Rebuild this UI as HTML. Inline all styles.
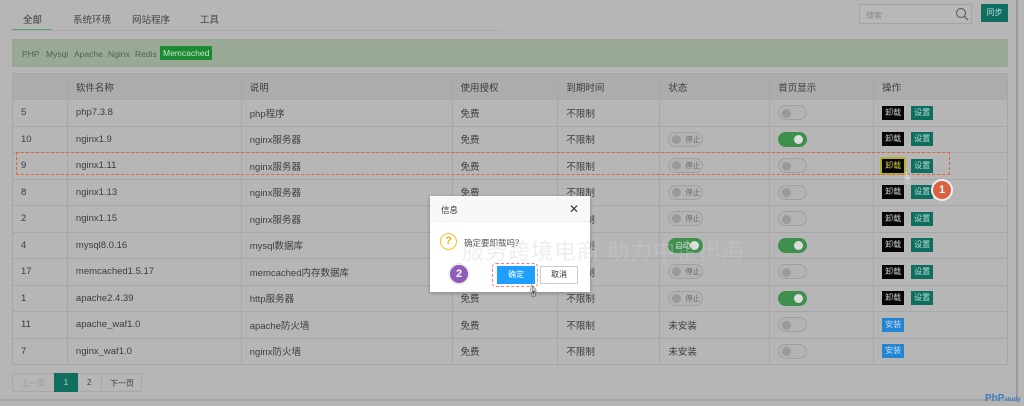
<!DOCTYPE html>
<html><head><meta charset="utf-8"><style>
*{box-sizing:border-box;margin:0;padding:0}
body{width:1024px;height:406px;background:#b5b5b5;font-family:"Liberation Sans","Noto Sans CJK SC",sans-serif;font-size:9px;color:#3a3a3a;position:relative;overflow:hidden}
.page{position:absolute;left:0;top:0;width:1018px;height:401px;background:#b6b6b6;border-right:2px solid #999;border-bottom:2px solid #a5a5a5}
.abs{position:absolute}
.tab{position:absolute;top:12px;font-size:9.5px;color:#444}
.filter{position:absolute;left:12px;top:39px;width:996px;height:28px;background:#9aa996;border:1px solid #93a68f;border-radius:2px}
.filter span{position:absolute;top:9px;color:#4a6a48;font-size:8.5px}
table{position:absolute;left:12px;top:73px;width:996px;border-collapse:collapse}
td{border:1px solid #a7a7a7;height:26.5px;padding-left:8px;font-size:9.5px;color:#3d3d3d;white-space:nowrap}
tr.h td{background:#acacac;height:26px}
.sw{display:inline-block;width:29px;height:15px;border:1px solid #9e9e9e;border-radius:8px;position:relative;vertical-align:middle;background:#b3b3b3}
.sw:after{content:"";position:absolute;left:3px;top:2.5px;width:9px;height:9px;border-radius:50%;background:#9a9a9a}
.sw.on{background:#3f8f4d;border-color:#3f8f4d}
.sw.on:after{left:auto;right:3px;background:#ddd}
.pill{display:inline-block;width:35px;height:15px;border:1px solid #a0a0a0;border-radius:8px;position:relative;vertical-align:middle;font-size:7.5px;color:#666;padding-left:16px;line-height:13px;background:#b3b3b3}
.pill:before{content:"";position:absolute;left:3px;top:2px;width:9px;height:9px;border-radius:50%;background:#9a9a9a}
.pill.on{background:#3f8f4d;border-color:#3f8f4d;color:#ddd;padding-left:6px}
.pill.on:before{left:auto;right:3px;background:#ddd}
.b{display:inline-block;height:14px;line-height:14px;padding:0 3px;font-size:8px;color:#ddd;vertical-align:middle}
.bk{background:#050505;color:#ccc}
.gr{background:#0f6e60;margin-left:7px;color:#bdd}
.bl{background:#2385d3;color:#cde}
</style></head><body>
<div class="page">
<div class="tab" style="left:23px;color:#333">全部</div>
<div class="abs" style="left:12px;top:29px;width:40px;height:2px;background:#5aa36a"></div>
<div class="abs" style="left:12px;top:30px;width:490px;height:1px;background:#aaa"></div>
<div class="tab" style="left:73px">系统环境</div>
<div class="tab" style="left:132px">网站程序</div>
<div class="tab" style="left:200px">工具</div>
<div class="abs" style="left:859px;top:4px;width:113px;height:20px;border:1px solid #a5a5a5;background:#b8b8b8;font-size:8px;color:#8a8a8a;padding:5px 6px">搜索</div>
<svg class="abs" style="left:955px;top:7px" width="14" height="14"><circle cx="6" cy="6" r="4.5" fill="none" stroke="#666" stroke-width="1.2"/><line x1="9.5" y1="9.5" x2="13" y2="13" stroke="#666" stroke-width="1.4"/></svg>
<div class="abs" style="left:981px;top:4px;width:27px;height:18px;background:#0f6e60;color:#bdd;font-size:8px;text-align:center;line-height:18px">同步</div>
<div class="filter">
<span style="left:9px">PHP</span><span style="left:33px">Mysql</span><span style="left:61px">Apache</span><span style="left:95px">Nginx</span><span style="left:122px">Redis</span>
<span style="left:147px;top:6px;background:#1b8a32;color:#c8e6c8;padding:2px 3px;border-radius:1px">Memcached</span>
</div>
<table>
<colgroup><col width="55"><col width="174"><col width="211"><col width="106"><col width="102"><col width="110"><col width="104"><col width="134"></colgroup>
<tr class="h"><td></td><td>软件名称</td><td>说明</td><td>使用授权</td><td>到期时间</td><td>状态</td><td>首页显示</td><td>操作</td></tr>
<tr><td>5</td><td>php7.3.8</td><td>php程序</td><td>免费</td><td>不限制</td><td></td><td><span class="sw"></span></td><td><span class="b bk">卸载</span><span class="b gr">设置</span></td></tr>
<tr><td>10</td><td>nginx1.9</td><td>nginx服务器</td><td>免费</td><td>不限制</td><td><span class="pill">停止</span></td><td><span class="sw on"></span></td><td><span class="b bk">卸载</span><span class="b gr">设置</span></td></tr>
<tr><td>9</td><td>nginx1.11</td><td>nginx服务器</td><td>免费</td><td>不限制</td><td><span class="pill">停止</span></td><td><span class="sw"></span></td><td><span class="b bk" style="outline:2px solid #b8b02a;color:#cc4">卸载</span><span class="b gr">设置</span></td></tr>
<tr><td>8</td><td>nginx1.13</td><td>nginx服务器</td><td>免费</td><td>不限制</td><td><span class="pill">停止</span></td><td><span class="sw"></span></td><td><span class="b bk">卸载</span><span class="b gr">设置</span></td></tr>
<tr><td>2</td><td>nginx1.15</td><td>nginx服务器</td><td>免费</td><td>不限制</td><td><span class="pill">停止</span></td><td><span class="sw"></span></td><td><span class="b bk">卸载</span><span class="b gr">设置</span></td></tr>
<tr><td>4</td><td>mysql8.0.16</td><td>mysql数据库</td><td>免费</td><td>不限制</td><td><span class="pill on">启动</span></td><td><span class="sw on"></span></td><td><span class="b bk">卸载</span><span class="b gr">设置</span></td></tr>
<tr><td>17</td><td>memcached1.5.17</td><td>memcached内存数据库</td><td>免费</td><td>不限制</td><td><span class="pill">停止</span></td><td><span class="sw"></span></td><td><span class="b bk">卸载</span><span class="b gr">设置</span></td></tr>
<tr><td>1</td><td>apache2.4.39</td><td>http服务器</td><td>免费</td><td>不限制</td><td><span class="pill">停止</span></td><td><span class="sw on"></span></td><td><span class="b bk">卸载</span><span class="b gr">设置</span></td></tr>
<tr><td>11</td><td>apache_waf1.0</td><td>apache防火墙</td><td>免费</td><td>不限制</td><td>未安装</td><td><span class="sw"></span></td><td><span class="b bl">安装</span></td></tr>
<tr><td>7</td><td>nginx_waf1.0</td><td>nginx防火墙</td><td>免费</td><td>不限制</td><td>未安装</td><td><span class="sw"></span></td><td><span class="b bl">安装</span></td></tr>
</table>
<div class="abs" style="left:12px;top:373px;width:130px;height:19px;border:1px solid #a8a8a8;font-size:8px">
<span class="abs" style="left:8px;top:4px;color:#999">上一页</span>
<span class="abs" style="left:41px;top:-1px;width:24px;height:19px;background:#0f6e60;color:#ccc;text-align:center;line-height:19px">1</span>
<span class="abs" style="left:74px;top:4px">2</span>
<span class="abs" style="left:88px;top:-1px;width:1px;height:19px;background:#a8a8a8"></span>
<span class="abs" style="left:97px;top:4px">下一页</span>
</div>
<div class="abs" style="left:16px;top:152px;width:934px;height:23px;border:1px dashed #e0663e"></div>
<div class="abs" style="left:931px;top:179px;width:22px;height:22px;border-radius:50%;background:#d9613e;border:2px solid #eee;color:#fff;font-size:11px;font-weight:bold;text-align:center;line-height:18px">1</div>
<div class="abs" style="left:901px;top:169px;font-size:12px;color:#eee">☝</div>
</div>
<div class="abs" style="left:430px;top:196px;width:160px;height:96px;background:#fff;box-shadow:0 1px 4px rgba(0,0,0,.3)">
<div style="height:26px;background:#f8f8f8;border-bottom:1px solid #eee;font-size:8.5px;padding:8px 11px;color:#333">信息</div>
<div class="abs" style="right:11px;top:6px;font-size:12px;color:#333">✕</div>
<div class="abs" style="left:10px;top:37px;width:17px;height:17px;border:1.5px solid #f2c12e;border-radius:50%;color:#f2b010;font-size:11px;font-weight:bold;text-align:center;line-height:14px">?</div>
<div class="abs" style="left:34px;top:41px;font-size:8.5px;color:#555">确定要卸载吗？</div>
<div class="abs" style="left:18px;top:67px;width:22px;height:22px;border-radius:50%;background:#8e5bb8;border:2px solid #eee;color:#fff;font-size:11px;font-weight:bold;text-align:center;line-height:18px">2</div>
<div class="abs" style="left:62px;top:67px;width:46px;height:24px;border:1px dashed #f08080;border-radius:4px"></div>
<div class="abs" style="left:67px;top:70px;width:38px;height:18px;background:#1e9fff;color:#fff;font-size:8px;text-align:center;line-height:18px">确定</div>
<div class="abs" style="left:110px;top:70px;width:38px;height:18px;border:1px solid #ccc;color:#333;font-size:8px;text-align:center;line-height:16px">取消</div>
<div class="abs" style="left:97px;top:86px;font-size:12px;color:#333">☝</div>
</div>
<div class="abs" style="left:462px;top:234px;font-size:22px;color:rgba(200,205,215,0.35);letter-spacing:1px">服务跨境电商 助力中企出海</div>
<div class="abs" style="left:985px;top:393px;font-size:10px;font-weight:bold;color:#3a7ac0">PhP<span style="font-size:6px">study</span></div>
</body></html>
